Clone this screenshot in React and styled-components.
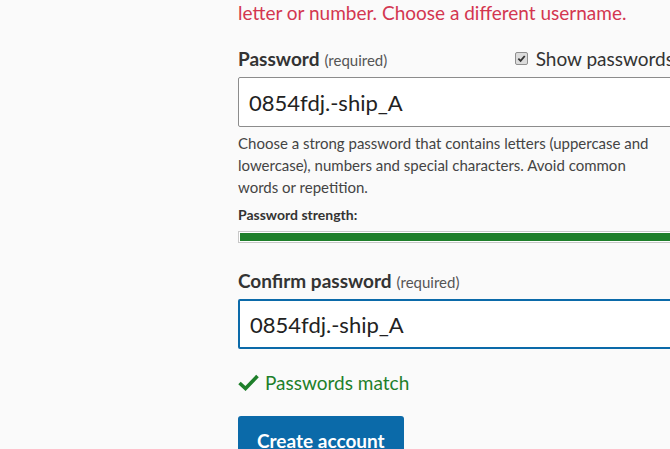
import React from "react"
import styled, { createGlobalStyle } from "styled-components"

const GlobalStyle = createGlobalStyle`
	html, body {
		margin: 0;
		padding: 0;
		background: #fafafa;
		overflow: hidden;
	}
	body {
		font-family: "Lato", "Noto Sans", sans-serif;
		color: #333;
	}
`

const colors = {
	text: "#333333",
	muted: "#444444",
	error: "#d33650",
	success: "#1e7f2a",
	blue: "#0b6aa9",
	border: "#8c8c8c",
}

const Page = styled.div`
	width: 436px;
	padding: 0 0 0 238px;
`

const ErrorText = styled.p`
	margin: 0;
	padding-top: 1px;
	font-size: 19px;
	line-height: 24px;
	color: ${colors.error};
	white-space: nowrap;
`

const Field = styled.div`
	margin-top: ${p => p.$top}px;
`

const LabelRow = styled.div`
	display: flex;
	justify-content: space-between;
	align-items: center;
	height: 26px;
`

const Label = styled.label`
	font-size: 19px;
	font-weight: 700;
	color: ${colors.text};
	white-space: nowrap;
	& span {
		font-size: 15px;
		font-weight: 400;
		color: #555;
		margin-left: 5px;
	}
`

const Toggle = styled.label`
	display: flex;
	align-items: center;
	gap: 8px;
	font-size: 19px;
	color: ${colors.text};
	white-space: nowrap;
`

const FakeCheck = styled.span`
	display: inline-flex;
	align-items: center;
	justify-content: center;
	width: 11px;
	height: 11px;
	border: 1px solid #8f8f8f;
	border-radius: 2px;
	background: #dcdcdc;
	& svg {
		width: 9px;
		height: 9px;
	}
`

const Input = styled.input`
	display: block;
	box-sizing: border-box;
	width: 100%;
	height: 50px;
	margin-top: ${p => p.$gap}px;
	padding: 0 10px;
	font-family: inherit;
	font-size: 22px;
	color: #222;
	background: #fff;
	border: ${p => (p.$focused ? `2px solid ${colors.blue}` : `1px solid ${colors.border}`)};
	border-radius: 2px;
	outline: none;
`

const Help = styled.p`
	margin: 5px 0 0;
	font-size: 15px;
	line-height: 22px;
	color: ${colors.muted};
	width: 430px;
`

const StrengthLabel = styled.div`
	margin-top: 8px;
	font-size: 14px;
	font-weight: 700;
	color: ${colors.text};
	line-height: 18px;
`

const Meter = styled.div`
	box-sizing: border-box;
	margin-top: 7px;
	height: 12px;
	padding: 1px;
	border: 1px solid #c8c8c8;
	background: #fff;
`

const MeterFill = styled.div`
	height: 100%;
	background: ${colors.success};
`

const Match = styled.div`
	display: flex;
	align-items: center;
	gap: 6px;
	margin-top: 22px;
	font-size: 19px;
	color: ${colors.success};
	& svg {
		width: 21px;
		height: 17px;
	}
`

const Button = styled.button`
	display: block;
	margin-top: 22px;
	height: 48px;
	padding: 0 19px;
	font-family: inherit;
	font-size: 19px;
	font-weight: 700;
	color: #fff;
	background: ${colors.blue};
	border: none;
	border-radius: 3px;
`

const App = () => {
	const strength = 100

	return (
		<>
			<GlobalStyle />
			<Page>
				<ErrorText>letter or number. Choose a different username.</ErrorText>

				<Field $top={20}>
					<LabelRow>
						<Label>Password<span>(required)</span></Label>
						<Toggle>
							<FakeCheck>
								<svg viewBox="0 0 10 10">
									<path d="M1.5 5.2 L4 7.6 L8.6 2.2" fill="none" stroke="#333" strokeWidth="2" />
								</svg>
							</FakeCheck>
							Show passwords
						</Toggle>
					</LabelRow>
					<Input $gap={6} type="text" defaultValue="0854fdj.-ship_A" />
					<Help>
						Choose a strong password that contains letters (uppercase and lowercase), numbers and special characters. Avoid common words or repetition.
					</Help>
					<StrengthLabel>Password strength:</StrengthLabel>
					<Meter>
						<MeterFill style={{ width: `${strength}%` }} />
					</Meter>
				</Field>

				<Field $top={24}>
					<LabelRow>
						<Label>Confirm password<span>(required)</span></Label>
					</LabelRow>
					<Input $gap={6} $focused type="text" defaultValue="0854fdj.-ship_A" />
				</Field>

				<Match>
					<svg viewBox="0 0 21 17">
						<path d="M1.5 9 L7.5 14.5 L19.5 2" fill="none" stroke={colors.success} strokeWidth="3.6" />
					</svg>
					Passwords match
				</Match>

				<Button>Create account</Button>
			</Page>
		</>
	)
}

export default App
